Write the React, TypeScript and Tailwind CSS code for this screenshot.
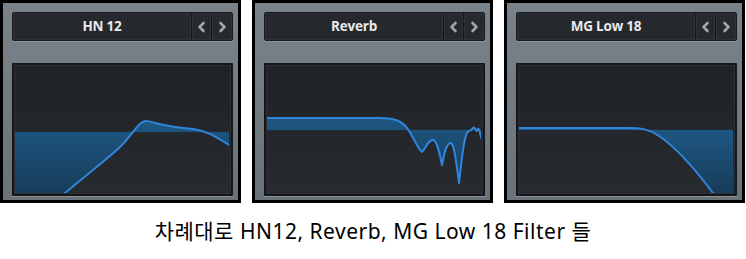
import React from "react";

type PanelProps = {
  title: string;
  curve: string;
  fill: string;
  baseline: number;
};

function Chevron({ dir }: { dir: "l" | "r" }) {
  return (
    <svg width="9" height="12" viewBox="0 0 9 12" className="block">
      <path
        d={dir === "l" ? "M6.5 2 L2.5 6 L6.5 10" : "M2.5 2 L6.5 6 L2.5 10"}
        fill="none"
        stroke="#9ea5ab"
        strokeWidth="2.6"
        strokeLinecap="round"
        strokeLinejoin="round"
      />
    </svg>
  );
}

function Panel({ title, curve, fill, baseline }: PanelProps) {
  const gid = "g" + title.replace(/\s/g, "");
  return (
    <div className="w-[241px] h-[203px] border-[3px] border-black bg-gradient-to-b from-[#7a8289] via-[#737b82] to-[#6a7279] pl-[9px] pr-[5px] pt-[9px] pb-[4px] flex flex-col">
      <div className="h-[29px] flex border border-[#16181b] bg-[#16181b] gap-[1px] rounded-[2px] shadow-[0_1px_0_#8c949a]">
        <div className="flex-1 bg-[#25282c] border border-[#2e3236] flex items-center justify-center text-[13.5px] font-bold text-[#e8eaec] font-['Open_Sans',sans-serif] tracking-[-0.2px]">
          {title}
        </div>
        <div className="w-[19px] bg-[#26292d] border border-[#2f3337] flex items-center justify-center">
          <Chevron dir="l" />
        </div>
        <div className="w-[20px] bg-[#26292d] border border-[#2f3337] flex items-center justify-center">
          <Chevron dir="r" />
        </div>
      </div>
      <div className="mt-[22px] h-[133px] border-2 border-[#141619] bg-[#1c1f22] rounded-[1px] shadow-[0_1px_0_#8c949a]">
        <div className="w-full h-full border border-[#2d3135] bg-gradient-to-b from-[#1f2226] to-[#272a2e]">
          <svg width="214" height="127" viewBox="0 0 214 127" className="block">
            <defs>
              <linearGradient id={gid} x1="0" y1="0" x2="0" y2="1">
                <stop offset="0" stopColor="#1e5a88" />
                <stop offset="1" stopColor="#163d5c" />
              </linearGradient>
            </defs>
            <path d={fill} fill={"url(#" + gid + ")"} fillOpacity="0.95" />
            <line x1="0" y1={baseline} x2="214" y2={baseline} stroke="#1e5a88" strokeOpacity="0.3" strokeWidth="1" />
            <path d={curve} fill="none" stroke="#2f86dc" strokeWidth="2" strokeLinejoin="round" strokeLinecap="round" />
          </svg>
        </div>
      </div>
    </div>
  );
}

const hnCurve =
  "M50 127 C70 110 90 95 105 81 C115 71 120 62 126 57 C130 54 134 55 140 57 C152 60 165 62 178 63 C192 65 200 70 214 79";
const hnFill =
  "M0 66 L0 127 L50 127 C70 110 90 95 105 81 C115 71 120 62 126 57 C130 54 134 55 140 57 C152 60 165 62 178 63 C192 65 200 70 214 79 L214 66 Z";

const rvPts =
  "C126 52 134 54 140 62 C145 68 150 82 155 86 C158 84 160 76 165 74 C168 73 171 78 175 99 C177 90 178 80 183 77 C186 76 188 85 192 117 C194 100 196 75 200 67 C202 63 204 66 206 62 C208 60 209 66 210 65 C211 62 212 60 214 72";
const rvCurve = "M0 52 L112 52 " + rvPts;
const rvFill = "M0 64 L0 52 L112 52 " + rvPts + " L214 64 Z";

const mgPts = "C122 62 130 63 140 70 C155 80 170 95 194 127";
const mgCurve = "M0 62 L108 62 " + mgPts;
const mgFill = "M0 64 L0 62 L108 62 " + mgPts + " L214 127 L214 64 Z";

export default function App() {
  return (
    <div className="w-[746px] h-[259px] bg-white flex flex-col">
      <div className="flex gap-[11px]">
        <Panel title="HN 12" curve={hnCurve} fill={hnFill} baseline={66} />
        <Panel title="Reverb" curve={rvCurve} fill={rvFill} baseline={64} />
        <Panel title="MG Low 18" curve={mgCurve} fill={mgFill} baseline={64} />
      </div>
      <div className="pt-[13px] text-center text-[21px] leading-[30px] tracking-[0.5px] text-black font-['Noto_Sans','Noto_Sans_CJK_KR',sans-serif]">
        차례대로 HN12, Reverb, MG Low 18 Filter 들
      </div>
    </div>
  );
}
